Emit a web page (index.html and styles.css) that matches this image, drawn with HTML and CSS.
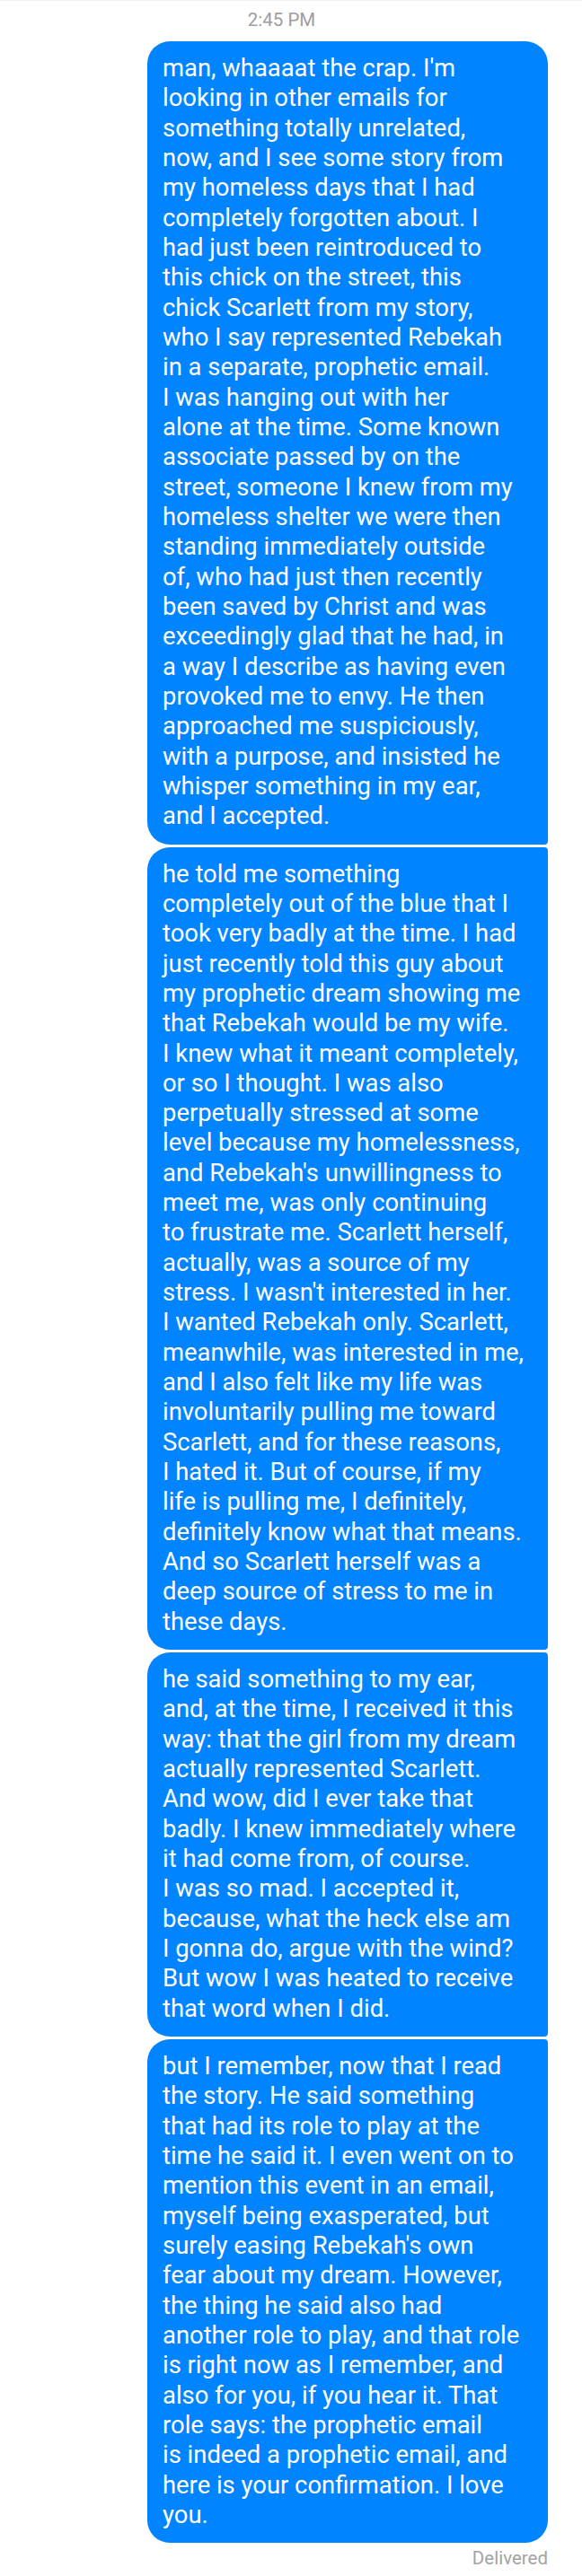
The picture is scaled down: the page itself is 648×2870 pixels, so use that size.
FILE: index.html
```html
<!DOCTYPE html>
<html lang="en">
<head>
<meta charset="utf-8">
<title>Messages</title>
<link rel="stylesheet" href="styles.css">
</head>
<body>
<main class="thread">
  <div class="timestamp">2:45 PM</div>
  <div class="group">
    <p class="bubble first">man, whaaaat the crap. I'm<br>looking in other emails for<br>something totally unrelated,<br>now, and I see some story from<br>my homeless days that I had<br>completely forgotten about. I<br>had just been reintroduced to<br>this chick on the street, this<br>chick Scarlett from my story,<br>who I say represented Rebekah<br>in a separate, prophetic email.<br>I was hanging out with her<br>alone at the time. Some known<br>associate passed by on the<br>street, someone I knew from my<br>homeless shelter we were then<br>standing immediately outside<br>of, who had just then recently<br>been saved by Christ and was<br>exceedingly glad that he had, in<br>a way I describe as having even<br>provoked me to envy. He then<br>approached me suspiciously,<br>with a purpose, and insisted he<br>whisper something in my ear,<br>and I accepted.</p>
    <p class="bubble middle">he told me something<br>completely out of the blue that I<br>took very badly at the time. I had<br>just recently told this guy about<br>my prophetic dream showing me<br>that Rebekah would be my wife.<br>I knew what it meant completely,<br>or so I thought. I was also<br>perpetually stressed at some<br>level because my homelessness,<br>and Rebekah's unwillingness to<br>meet me, was only continuing<br>to frustrate me. Scarlett herself,<br>actually, was a source of my<br>stress. I wasn't interested in her.<br>I wanted Rebekah only. Scarlett,<br>meanwhile, was interested in me,<br>and I also felt like my life was<br>involuntarily pulling me toward<br>Scarlett, and for these reasons,<br>I hated it. But of course, if my<br>life is pulling me, I definitely,<br>definitely know what that means.<br>And so Scarlett herself was a<br>deep source of stress to me in<br>these days.</p>
    <p class="bubble middle">he said something to my ear,<br>and, at the time, I received it this<br>way: that the girl from my dream<br>actually represented Scarlett.<br>And wow, did I ever take that<br>badly. I knew immediately where<br>it had come from, of course.<br>I was so mad. I accepted it,<br>because, what the heck else am<br>I gonna do, argue with the wind?<br>But wow I was heated to receive<br>that word when I did.</p>
    <p class="bubble last">but I remember, now that I read<br>the story. He said something<br>that had its role to play at the<br>time he said it. I even went on to<br>mention this event in an email,<br>myself being exasperated, but<br>surely easing Rebekah's own<br>fear about my dream. However,<br>the thing he said also had<br>another role to play, and that role<br>is right now as I remember, and<br>also for you, if you hear it. That<br>role says: the prophetic email<br>is indeed a prophetic email, and<br>here is your confirmation. I love<br>you.</p>
  </div>
  <div class="status">Delivered</div>
</main>
</body>
</html>
```

FILE: styles.css
```css
html, body {
  margin: 0;
  padding: 0;
  background: #ffffff;
}

body {
  font-family: Roboto, "Noto Sans", "Liberation Sans", sans-serif;
  -webkit-font-smoothing: antialiased;
}

.thread {
  width: 648px;
  display: flex;
  flex-direction: column;
  border-top: 1px solid #f3f3f3;
}

.timestamp {
  padding-top: 9px;
  padding-right: 21px;
  text-align: center;
  font-size: 20.5px;
  line-height: 24px;
  color: #9e9e9e;
  margin-bottom: 12px;
}

.group {
  align-self: flex-end;
  margin-right: 38px;
  width: 446px;
  display: flex;
  flex-direction: column;
  gap: 3px;
}

.bubble {
  margin: 0;
  background: #0084ff;
  color: #ffffff;
  font-size: 27.4px;
  line-height: 33.33px;
  padding: 14px 17px;
  white-space: nowrap;
  border-radius: 25px 4px 4px 25px;
}

.bubble.first {
  border-top-right-radius: 25px;
}

.bubble.last {
  border-bottom-right-radius: 25px;
}

.status {
  align-self: flex-end;
  margin-right: 38px;
  margin-top: 5px;
  font-size: 20.5px;
  line-height: 24px;
  color: #a3a3a3;
}
```
